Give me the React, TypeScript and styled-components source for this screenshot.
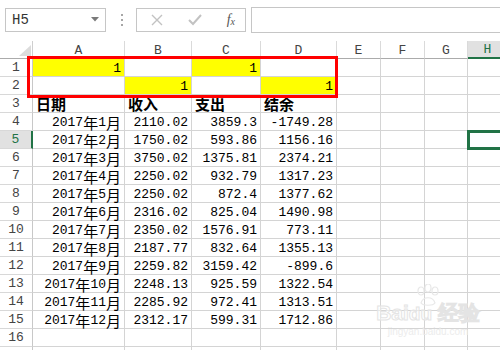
import React from 'react'
import styled, { createGlobalStyle } from 'styled-components'

const GREEN = '#217346'
const GRID = '#d4d4d4'

type Row = {
  n: number
  cells: string[]
  yellow?: boolean[]
  head?: boolean
}

const rows: Row[] = [
  { n: 1, cells: ['1', '', '1', ''], yellow: [true, false, true, false] },
  { n: 2, cells: ['', '1', '', '1'], yellow: [false, true, false, true] },
  { n: 3, cells: ['日期', '收入', '支出', '结余'], head: true },
  { n: 4, cells: ['2017年1月', '2110.02', '3859.3', '-1749.28'] },
  { n: 5, cells: ['2017年2月', '1750.02', '593.86', '1156.16'] },
  { n: 6, cells: ['2017年3月', '3750.02', '1375.81', '2374.21'] },
  { n: 7, cells: ['2017年4月', '2250.02', '932.79', '1317.23'] },
  { n: 8, cells: ['2017年5月', '2250.02', '872.4', '1377.62'] },
  { n: 9, cells: ['2017年6月', '2316.02', '825.04', '1490.98'] },
  { n: 10, cells: ['2017年7月', '2350.02', '1576.91', '773.11'] },
  { n: 11, cells: ['2017年8月', '2187.77', '832.64', '1355.13'] },
  { n: 12, cells: ['2017年9月', '2259.82', '3159.42', '-899.6'] },
  { n: 13, cells: ['2017年10月', '2248.13', '925.59', '1322.54'] },
  { n: 14, cells: ['2017年11月', '2285.92', '972.41', '1313.51'] },
  { n: 15, cells: ['2017年12月', '2312.17', '599.31', '1712.86'] },
  { n: 16, cells: ['', '', '', ''] },
  { n: 17, cells: ['', '', '', ''] },
]

const columns = ['A', 'B', 'C', 'D', 'E', 'F', 'G', 'H']

// split "2017年1月" so the han characters get a full-width size
const renderText = (text: string) => {
  const parts = text.split(/([年月])/).filter((p) => p !== '')
  return parts.map((p, i) => (p === '年' || p === '月' ? <Han key={i}>{p}</Han> : p))
}

const App: React.FC = () => (
  <>
    <GlobalStyle />
    <Page>
      <FormulaBar>
        <NameBox>
          <span>H5</span>
          <svg width="8" height="5" viewBox="0 0 8 5">
            <polygon points="0,0 8,0 4,4.5" fill="#7a7a7a" />
          </svg>
        </NameBox>
        <Dots>
          <i />
          <i />
          <i />
        </Dots>
        <ButtonBox>
          <svg width="12" height="12" viewBox="0 0 12 12">
            <path d="M1 1 L11 11 M11 1 L1 11" stroke="#c2c2c2" strokeWidth="1.4" />
          </svg>
          <svg width="14" height="12" viewBox="0 0 14 12">
            <path d="M1 6 L5 10 L13 1" stroke="#c2c2c2" strokeWidth="2" fill="none" />
          </svg>
          <Fx>
            f<sub>x</sub>
          </Fx>
        </ButtonBox>
        <FormulaInput />
      </FormulaBar>

      <Sheet>
        <Corner>
          <svg width="12" height="11" viewBox="0 0 12 11">
            <polygon points="12,0 12,11 0,11" fill="#dcdcdc" />
          </svg>
        </Corner>
        {columns.map((c) => (
          <ColHead key={c} $active={c === 'H'}>
            {c}
          </ColHead>
        ))}

        {rows.map((row) => (
          <React.Fragment key={row.n}>
            <RowHead $active={row.n === 5}>{row.n}</RowHead>
            {row.cells.map((text, i) => (
              <Cell
                key={i}
                $yellow={row.yellow ? row.yellow[i] : false}
                $head={row.head}
              >
                {renderText(text)}
              </Cell>
            ))}
            <Cell />
            <Cell />
            <Cell />
            <Cell />
          </React.Fragment>
        ))}

        <RedFrame />
        <Selection />
        <Watermark>
          <svg width="30" height="22" viewBox="0 0 30 22">
            <g fill="none" stroke="#e8e8e8" strokeWidth="1.2">
              <ellipse cx="8" cy="7" rx="3" ry="4" />
              <ellipse cx="15" cy="4" rx="3" ry="4" />
              <ellipse cx="22" cy="7" rx="3" ry="4" />
              <path d="M8 19 C10 12 20 12 22 19 C20 22 10 22 8 19 Z" />
            </g>
          </svg>
          <Brand>
            Bai<span>du</span> 经验
          </Brand>
          <BrandUrl>jingyan.baidu.com</BrandUrl>
        </Watermark>
      </Sheet>
    </Page>
  </>
)

export default App

const GlobalStyle = createGlobalStyle`
  html, body {
    margin: 0;
    padding: 0;
    background: #ffffff;
    overflow: hidden;
  }
  body {
    font-family: "Liberation Mono", "Noto Sans CJK SC", monospace;
  }
`
const Page = styled.div`
  width: 500px;
  height: 350px;
  overflow: hidden;
  background: #fff;
`
const FormulaBar = styled.div`
  display: flex;
  align-items: center;
  height: 41px;
  padding: 0 0 2px 5px;
  box-sizing: border-box;
`
const NameBox = styled.div`
  display: flex;
  align-items: center;
  justify-content: space-between;
  width: 101px;
  height: 24px;
  box-sizing: border-box;
  border: 1px solid #c6c6c6;
  padding: 0 6px 0 6px;
  font-family: "Liberation Mono", monospace;
  font-size: 14px;
  color: #333;
`
const Dots = styled.div`
  display: flex;
  flex-direction: column;
  gap: 3px;
  margin: 0 13px 0 15px;

  i {
    display: block;
    width: 2px;
    height: 2px;
    background: #a6a6a6;
  }
`
const ButtonBox = styled.div`
  display: flex;
  align-items: center;
  justify-content: space-between;
  width: 110px;
  height: 24px;
  box-sizing: border-box;
  border: 1px solid #c6c6c6;
  padding: 0 10px 0 14px;
`
const Fx = styled.span`
  font-family: "Liberation Serif", serif;
  font-style: italic;
  font-size: 14px;
  color: #555;
  line-height: 1;

  sub {
    font-size: 10px;
    vertical-align: -1px;
  }
`
const FormulaInput = styled.div`
  flex: 1;
  height: 24px;
  margin-left: 5px;
  border: 1px solid #c6c6c6;
  border-right: none;
`
const Sheet = styled.div`
  position: relative;
  display: grid;
  grid-template-columns: 33px 92px 67px 69px 76px 44px 44px 43px 40px;
  grid-auto-rows: 18px;
  font-size: 13px;
  color: #000;
`
const Corner = styled.div`
  display: flex;
  align-items: flex-end;
  justify-content: flex-end;
  padding: 0 1px 2px 0;
  box-sizing: border-box;
  border-right: 1px solid #cfcfcf;
  border-bottom: 1px solid #ababab;
`
const ColHead = styled.div<{ $active?: boolean }>`
  display: flex;
  align-items: center;
  justify-content: center;
  box-sizing: border-box;
  padding-top: 1px;
  border-right: 1px solid #dadada;
  border-bottom: ${(p) => (p.$active ? `2px solid ${GREEN}` : '1px solid #ababab')};
  background: ${(p) => (p.$active ? '#e1e1e1' : '#fff')};
  color: ${(p) => (p.$active ? GREEN : '#444')};
  font-family: "Liberation Mono", monospace;
  font-size: 13px;
`
const RowHead = styled.div<{ $active?: boolean }>`
  display: flex;
  align-items: center;
  justify-content: center;
  box-sizing: border-box;
  border-bottom: 1px solid #d8d8d8;
  border-right: ${(p) => (p.$active ? `2px solid ${GREEN}` : '1px solid #c8c8c8')};
  background: ${(p) => (p.$active ? '#e1e1e1' : '#fff')};
  color: ${(p) => (p.$active ? GREEN : '#444')};
  font-size: 13px;
`
const Cell = styled.div<{ $yellow?: boolean; $head?: boolean }>`
  display: flex;
  align-items: center;
  justify-content: ${(p) => (p.$head ? 'flex-start' : 'flex-end')};
  box-sizing: border-box;
  padding: ${(p) => (p.$head ? '0 0 0 3px' : '1px 3px 0 0')};
  border-right: 1px solid ${GRID};
  border-bottom: 1px solid ${GRID};
  background: ${(p) => (p.$yellow ? '#ffff00' : '#fff')};
  white-space: nowrap;
  font-family: ${(p) => (p.$head ? '"Noto Sans CJK SC", sans-serif' : 'inherit')};
  font-size: ${(p) => (p.$head ? '15px' : '13px')};
  font-weight: ${(p) => (p.$head ? 700 : 400)};
  line-height: 1;
`
const Han = styled.span`
  font-family: "Noto Sans CJK SC", sans-serif;
  font-size: 15px;
  line-height: 1;
`
const RedFrame = styled.div`
  position: absolute;
  left: 27px;
  top: 15px;
  width: 311px;
  height: 42px;
  box-sizing: border-box;
  border: 3px solid #ff0000;
  pointer-events: none;
`
const Selection = styled.div`
  position: absolute;
  left: 467px;
  top: 89px;
  width: 40px;
  height: 20px;
  box-sizing: border-box;
  border: 3px solid ${GREEN};
`
const Watermark = styled.div`
  position: absolute;
  left: 382px;
  top: 243px;
  display: flex;
  flex-direction: column;
  align-items: center;
  width: 92px;
  pointer-events: none;
`
const Brand = styled.div`
  margin-top: -4px;
  font-family: "Liberation Sans", sans-serif;
  font-weight: 700;
  font-size: 21px;
  line-height: 1;
  color: rgba(255, 255, 255, 0.5);
  -webkit-text-stroke: 1px #e4e4e4;
  white-space: nowrap;

  span {
    font-size: 19px;
  }
`
const BrandUrl = styled.div`
  margin-top: 3px;
  font-family: "Liberation Sans", sans-serif;
  font-size: 10px;
  color: #ececec;
  white-space: nowrap;
`
